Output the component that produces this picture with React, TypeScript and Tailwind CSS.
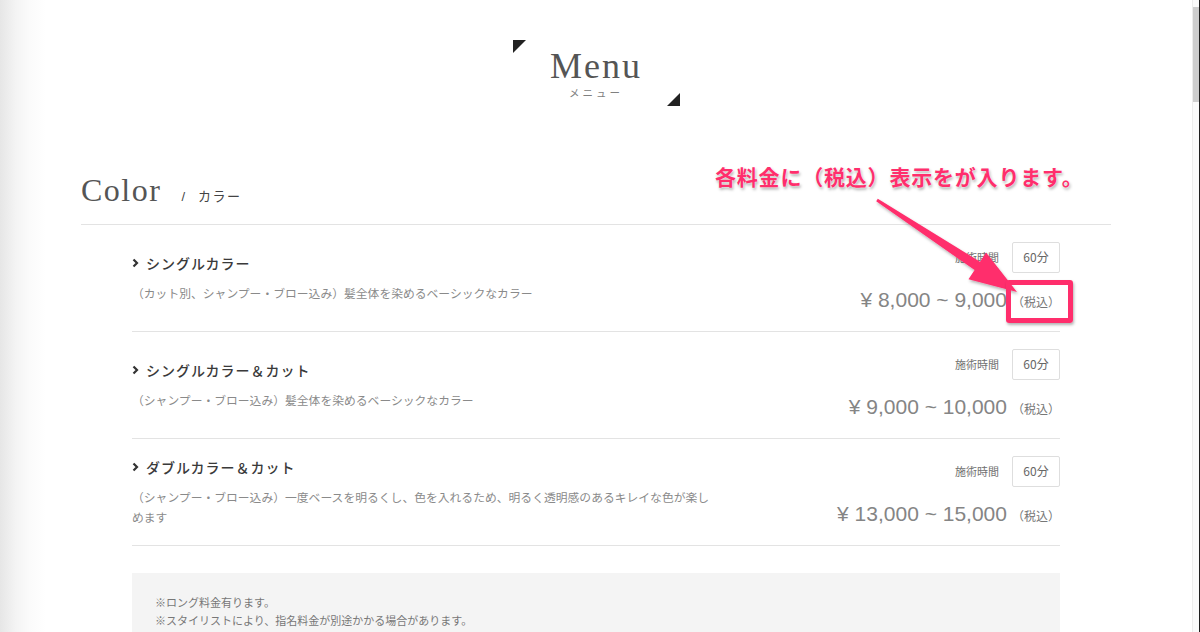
import React from "react";

const jp = "font-['Noto_Sans_CJK_JP','Noto_Sans',sans-serif]";

function Chevron() {
  return (
    <svg width="7" height="10" viewBox="0 0 7 10" className="shrink-0">
      <polyline points="1.5,1.5 5,5 1.5,8.5" fill="none" stroke="#333" strokeWidth="2.2" />
    </svg>
  );
}

type Item = { title: string; desc: string; price: string };

const items: Item[] = [
  { title: "シングルカラー", desc: "（カット別、シャンプー・ブロー込み）髪全体を染めるベーシックなカラー", price: "¥ 8,000 ~ 9,000" },
  { title: "シングルカラー＆カット", desc: "（シャンプー・ブロー込み）髪全体を染めるベーシックなカラー", price: "¥ 9,000 ~ 10,000" },
  { title: "ダブルカラー＆カット", desc: "（シャンプー・ブロー込み）一度ベースを明るくし、色を入れるため、明るく透明感のあるキレイな色が楽しめます", price: "¥ 13,000 ~ 15,000" },
];

function Row({ item }: { item: Item }) {
  return (
    <div className="flex items-center justify-between border-b border-[#e3e3e3] pt-[17px] pb-[17px]">
      <div className="flex flex-col">
        <div className="flex items-center gap-[7px]">
          <Chevron />
          <span className={`${jp} text-[14px] leading-[22px] tracking-[0.07em] font-medium text-[#3a3a3a]`}>{item.title}</span>
        </div>
        <p className={`${jp} mt-[9px] max-w-[582px] text-[11.8px] leading-[20px] text-[#8a8a8a]`}>{item.desc}</p>
      </div>
      <div className="flex flex-col items-end">
        <div className="flex items-center gap-[13px]">
          <span className={`${jp} text-[11px] text-[#707070]`}>施術時間</span>
          <span className={`${jp} flex h-[31px] w-[48px] items-center justify-center rounded-[2px] border border-[#dedede] text-[12px] text-[#666]`}>60分</span>
        </div>
        <div className="mt-[13px] flex h-[28px] items-baseline">
          <span className="font-['Liberation_Sans',Arial,sans-serif] text-[21px] leading-[28px] text-[#858585]">{item.price}</span>
          <span className={`${jp} ml-[5px] text-[12px] text-[#777]`}>（税込）</span>
        </div>
      </div>
    </div>
  );
}

export default function App() {
  return (
    <div className="relative flex h-[632px] w-[1200px] overflow-hidden bg-white">
      <div className="flex-1 bg-[linear-gradient(to_right,#e6e6e6_0px,#f4f4f4_16px,#fbfbfb_30px,#ffffff_46px)]">
        <div className="flex justify-center pt-[40px]">
          <div className="relative flex h-[66px] w-[167px] flex-col items-center pt-[8px]">
            <svg className="absolute left-0 top-0" width="13" height="13" viewBox="0 0 13 13">
              <polygon points="0,0 13,0 0,13" fill="#222" />
            </svg>
            <svg className="absolute bottom-0 right-0" width="13" height="13" viewBox="0 0 13 13">
              <polygon points="13,0 13,13 0,13" fill="#222" />
            </svg>
            <span className="font-['Liberation_Serif',serif] text-[36px] leading-[36px] tracking-[2px] text-[#555]">Menu</span>
            <span className={`${jp} mt-[2px] text-[10.5px] leading-[14px] tracking-[3px] text-[#808080]`}>メニュー</span>
          </div>
        </div>

        <div className="mx-[81px] mt-[68px]">
          <div className="flex items-baseline border-b border-[#e3e3e3] pb-[17px]">
            <span className="font-['Liberation_Serif',serif] text-[32px] leading-[32px] tracking-[1.5px] text-[#555]">Color</span>
            <span className="ml-[20px] font-['Liberation_Sans',sans-serif] text-[13px] text-[#444]">/</span>
            <span className={`${jp} ml-[13px] text-[13px] tracking-[1.5px] text-[#444]`}>カラー</span>
          </div>

          <div className="mx-[51px]">
            {items.map((it) => (
              <Row key={it.title} item={it} />
            ))}
            <div className={`${jp} mt-[27px] bg-[#f4f4f4] px-[23px] pt-[20px] pb-[20px] text-[11px] leading-[18px] text-[#777]`}>
              <p>※ロング料金有ります。</p>
              <p>※スタイリストにより、指名料金が別途かかる場合があります。</p>
            </div>
          </div>
        </div>
      </div>

      <div className="w-[7px] border-l border-[#ececec] bg-[#fafafa] pt-[7px]">
        <div className="h-[95px] w-full bg-[#cdcdcd]" />
      </div>
      <div className="w-px bg-[#1e1e1e]" />

      {/* annotation overlay */}
      <div className={`${jp} absolute left-[715px] top-[163px] text-[21px] font-bold leading-[26px] tracking-[0.8px] text-[#ff2e6c] [text-shadow:0_0_2px_#fff,1px_2px_3px_rgba(0,0,0,0.35)]`}>
        各料金に（税込）表示をが入ります。
      </div>
      <svg className="pointer-events-none absolute left-0 top-0" width="1200" height="632" viewBox="0 0 1200 632">
        <defs>
          <filter id="sh" x="-20%" y="-20%" width="140%" height="140%">
            <feDropShadow dx="1" dy="2" stdDeviation="1.5" floodColor="#000" floodOpacity="0.3" />
          </filter>
        </defs>
        <polygon
          points="877.8,198.7 980,261.7 986.1,252.5 1017,292 968.5,279.3 974.6,270.1 876.2,201.3"
          fill="#ff2e6c"
          filter="url(#sh)"
        />
      </svg>
      <div className="absolute left-[1006px] top-[280px] h-[43px] w-[67px] rounded-[3px] border-[5px] border-[#ff2e6c] shadow-[1px_2px_3px_rgba(0,0,0,0.3)]" />
    </div>
  );
}
